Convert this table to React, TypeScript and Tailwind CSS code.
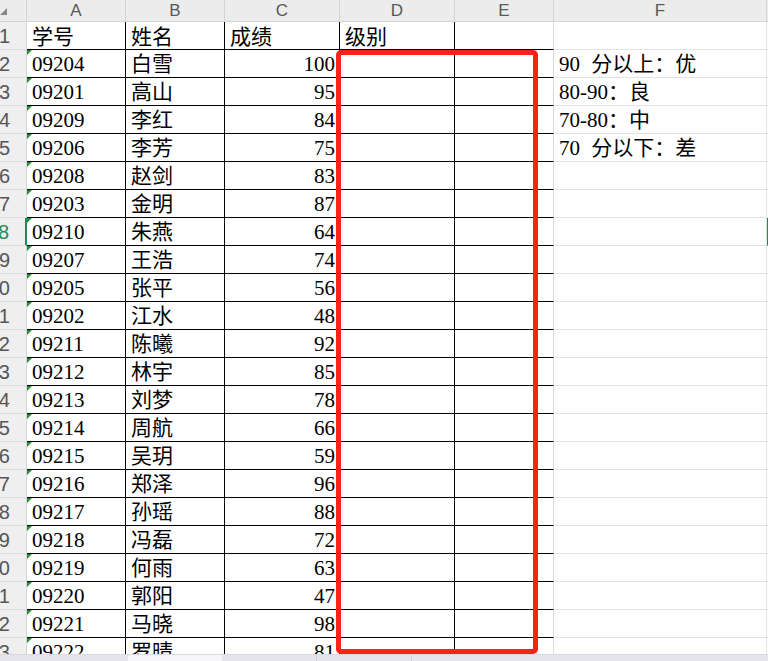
import React from "react"

const rows: [string, string, string][] = [
  ["09204", "白雪", "100"],
  ["09201", "高山", "95"],
  ["09209", "李红", "84"],
  ["09206", "李芳", "75"],
  ["09208", "赵剑", "83"],
  ["09203", "金明", "87"],
  ["09210", "朱燕", "64"],
  ["09207", "王浩", "74"],
  ["09205", "张平", "56"],
  ["09202", "江水", "48"],
  ["09211", "陈曦", "92"],
  ["09212", "林宇", "85"],
  ["09213", "刘梦", "78"],
  ["09214", "周航", "66"],
  ["09215", "吴玥", "59"],
  ["09216", "郑泽", "96"],
  ["09217", "孙瑶", "88"],
  ["09218", "冯磊", "72"],
  ["09219", "何雨", "63"],
  ["09220", "郭阳", "47"],
  ["09221", "马晓", "98"],
  ["09222", "罗晴", "81"],
]

const notes = ["90 分以上：优", "80-90：良", "70-80：中", "70 分以下：差"]

const cellFont = { fontFamily: "'Liberation Serif', 'Noto Sans CJK SC', serif" }
const headFont = { fontFamily: "'Liberation Sans', 'Noto Sans', sans-serif" }

function RowHead({ n, active }: { n: number; active?: boolean }) {
  return (
    <div
      className={`h-[28px] bg-[#efefef] border-b border-[#dadada] overflow-hidden flex items-center justify-end pr-[16px] text-[20px] leading-none ${
        active ? "text-[#1e8a57] border-r-2 border-r-[#1e8a57]" : "text-[#555] border-r border-r-[#d4d4d4]"
      }`}
      style={headFont}
    >
      {n}
    </div>
  )
}

export default function App() {
  const colLetters = ["A", "B", "C", "D", "E", "F", ""]
  return (
    <div className="w-[768px] h-[661px] overflow-hidden bg-white flex flex-col">
      <div className="relative flex-1 overflow-hidden">
        <div className="grid grid-cols-[27px_99px_99px_115px_115px_99px_213px_60px]">
          {/* column header */}
          <div className="h-[22px] bg-[#ececec] border-b border-r border-[#d4d4d4] relative">
            <div className="absolute left-0 top-[8px] w-0 h-0 border-b-[7px] border-l-[7px] border-b-[#8a8a8a] border-l-transparent" />
          </div>
          {colLetters.map((c, i) => (
            <div
              key={i}
              className="h-[22px] bg-[#ececec] border-b border-r border-[#d4d4d4] flex items-center justify-center text-[17px] leading-[18px] text-[#5a5a5a]"
              style={headFont}
            >
              {c}
            </div>
          ))}

          {/* row 1 */}
          <RowHead n={1} />
          {["学号", "姓名", "成绩", "级别", ""].map((t, i) => (
            <div
              key={i}
              className={`h-[28px] border-b border-black flex items-end pb-[1px] pl-[5px] text-[21px] leading-none text-black ${
                i === 4 ? "border-r border-r-[#dcdcdc]" : "border-r"
              }`}
              style={cellFont}
            >
              {t}
            </div>
          ))}
          <div className="h-[28px] border-b border-r border-[#e2e2e2]" />
          <div className="h-[28px] border-b border-[#e2e2e2]" />

          {rows.map((r, idx) => {
            const n = idx + 2
            const note = notes[idx]
            return (
              <React.Fragment key={n}>
                <RowHead n={n} active={n === 8} />
                <div
                  className="relative h-[28px] border-b border-r border-black flex items-end pb-[2px] pl-[5px] text-[21px] leading-none text-black"
                  style={cellFont}
                >
                  <div className="absolute left-0 top-0 w-0 h-0 border-t-[5px] border-r-[5px] border-t-[#1f8f3a] border-r-transparent" />
                  {r[0]}
                </div>
                <div
                  className="h-[28px] border-b border-r border-black flex items-end pb-[2px] pl-[5px] text-[21px] leading-none text-black"
                  style={cellFont}
                >
                  {r[1]}
                </div>
                <div
                  className="h-[28px] border-b border-r border-black flex items-end justify-end pb-[2px] pr-[4px] text-[21px] leading-none text-black"
                  style={cellFont}
                >
                  {r[2]}
                </div>
                <div className="h-[28px] border-b border-r border-black" />
                <div className="h-[28px] border-b border-black border-r border-r-[#dcdcdc]" />
                <div
                  className="h-[28px] border-b border-r border-[#e2e2e2] flex items-end pb-[2px] pl-[5px] text-[21px] leading-none text-black whitespace-nowrap [word-spacing:6px]"
                  style={cellFont}
                >
                  {note ?? ""}
                </div>
                <div
                  className={`h-[28px] border-b border-[#e2e2e2] ${n === 8 ? "border-l-2 border-l-[#1e8a57]" : ""}`}
                />
              </React.Fragment>
            )
          })}
        </div>

        {/* highlight box */}
        <div className="absolute left-[336px] top-[50px] w-[202px] h-[604px] border-[5px] border-[#fb2219] rounded-[5px]" />
      </div>

      {/* bottom scroll strip */}
      <div className="h-[7px] flex bg-[#e4e4ea] border-t border-[#d8d8de]">
        <div className="w-[128px]" />
        <div className="w-[94px] bg-[#f6f6f8]" />
        <div className="w-[95px] border-r border-[#d0d0d6]" />
        <div className="w-[95px] border-r border-[#d0d0d6]" />
      </div>
    </div>
  )
}
